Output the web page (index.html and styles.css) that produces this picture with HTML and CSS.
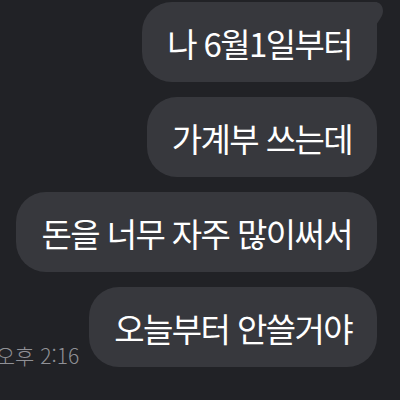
FILE: index.html
```html
<!DOCTYPE html>
<html lang="ko">
<head>
<meta charset="utf-8">
<link rel="stylesheet" href="styles.css">
</head>
<body>
<div class="chat">
  <div class="bubble first">나 6월1일부터<svg class="tail" width="10" height="26" viewBox="0 0 10 26"><path d="M0 0 C5 0 8 4 8 9 C8 14 4 18 0 25 Z" fill="#37383d"/></svg></div>
  <div class="bubble">가계부 쓰는데</div>
  <div class="bubble">돈을 너무 자주 많이써서</div>
  <div class="row">
    <span class="time">오후 2:16</span>
    <div class="bubble">오늘부터 안쓸거야</div>
  </div>
</div>
</body>
</html>
```

FILE: styles.css
```css
html, body {
  margin: 0;
  padding: 0;
  background: #212226;
  width: 400px;
  height: 400px;
  overflow: hidden;
}
.chat {
  display: flex;
  flex-direction: column;
  align-items: flex-end;
  gap: 15px;
  padding: 2px 23px 0 0;
  font-family: "Noto Sans CJK KR", "Noto Sans", sans-serif;
}
.bubble {
  position: relative;
  height: 80px;
  display: flex;
  align-items: center;
  padding: 2px 25px 0 25px;
  box-sizing: border-box;
  background: #37383d;
  border-radius: 30px;
  color: #ffffff;
  font-size: 33px;
  letter-spacing: -1.6px;
  white-space: nowrap;
}
.first {
  border-top-right-radius: 0;
}
.tail {
  position: absolute;
  top: 0;
  right: -8px;
  display: block;
}
.row {
  display: flex;
  align-items: flex-end;
  justify-content: flex-end;
  gap: 10px;
}
.time {
  color: #909196;
  font-size: 21px;
  font-weight: 300;
  line-height: 1;
  padding-bottom: 1px;
  white-space: nowrap;
}
```
